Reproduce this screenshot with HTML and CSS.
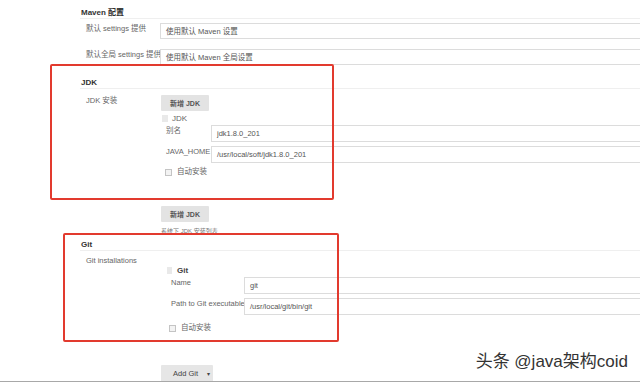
FILE: index.html
```html
<!DOCTYPE html>
<html lang="zh-CN">

<head>
    <meta charset="UTF-8">
    <meta name="viewport" content="width=device-width, initial-scale=1.0">
    <title>全局工具配置</title>

    <link rel="stylesheet" href="styles.css">
</head>

<body>

    <div class="viewport">
        <div class="page">

            <!-- MAVEN -->
            <section class="section section__maven">
                <div class="section__title">Maven 配置</div>
                <div class="row">
                    <div class="row__label">默认 settings 提供</div>
                    <div class="row__field">
                        <div class="select">使用默认 Maven 设置</div>
                    </div>
                </div>
                <div class="row row--second">
                    <div class="row__label">默认全局 settings 提供</div>
                    <div class="row__field">
                        <div class="select">使用默认 Maven 全局设置</div>
                    </div>
                </div>
            </section>

            <!-- JDK -->
            <section class="section section__jdk">
                <div class="section__title">JDK</div>
                <div class="row row--install">
                    <div class="row__label">JDK 安装</div>
                    <div class="row__field">
                        <button class="btn">新增 JDK</button>
                        <div class="repeat">
                            <div class="repeat__head"><span class="handle"></span>JDK</div>
                            <div class="sub-row">
                                <div class="sub-row__label">别名</div>
                                <div class="input">jdk1.8.0_201</div>
                            </div>
                            <div class="sub-row sub-row--next">
                                <div class="sub-row__label">JAVA_HOME</div>
                                <div class="input">/usr/local/soft/jdk1.8.0_201</div>
                            </div>
                            <div class="check-row"><span class="checkbox"></span>自动安装</div>
                        </div>
                        <button class="btn btn--add">新增 JDK</button>
                        <div class="hint">系统下 JDK 安装列表</div>
                    </div>
                </div>
            </section>

            <!-- GIT -->
            <section class="section section__git">
                <div class="section__title">Git</div>
                <div class="row row--install">
                    <div class="row__label">Git installations</div>
                    <div class="row__field">
                        <div class="repeat repeat--git">
                            <div class="repeat__head"><span class="handle"></span>Git</div>
                            <div class="sub-row">
                                <div class="sub-row__label">Name</div>
                                <div class="input">git</div>
                            </div>
                            <div class="sub-row sub-row--next">
                                <div class="sub-row__label">Path to Git executable</div>
                                <div class="input">/usr/local/git/bin/git</div>
                            </div>
                            <div class="check-row"><span class="checkbox"></span>自动安装</div>
                        </div>
                        <button class="btn btn--git">Add Git <span class="caret">&#9662;</span></button>
                    </div>
                </div>
            </section>

        </div>

        <!-- marks over the screenshot -->
        <div class="red-box red-box--jdk"></div>
        <div class="red-box red-box--git"></div>
        <div class="watermark">头条 @java架构coid</div>
    </div>

</body>
</html>
```

FILE: styles.css
```css
html,
body {
    margin: 0;
    padding: 0;
    background-color: #fff;
    overflow: hidden;
}

body {
    font-family: "Liberation Sans", "Noto Sans CJK SC", sans-serif;
    font-size: 7.5px;
    color: #666;
}

.viewport {
    position: relative;
    width: 640px;
    height: 382px;
    overflow: hidden;
    box-sizing: border-box;
    border-bottom: 1px solid #a8a8a8;
}

.page {
    width: 680px;
    padding-left: 80px;
    box-sizing: border-box;
}

/* Sections */

.section__maven {
    padding-top: 1px;
}

.section__jdk {
    margin-top: 6px;
}

.section__git {
    margin-top: -2px;
}

.section__title {
    padding: 6px 0 0 1px;
    line-height: 11px;
    font-size: 8px;
    font-weight: bold;
    color: #333;
    border-bottom: 1px solid #efefef;
}

.row {
    display: flex;
    align-items: flex-start;
    margin-top: 4px;
}

.row--second {
    margin-top: 10px;
}

.row--install {
    margin-top: 6px;
}

.section__git .row--install {
    margin-top: 4px;
}

.row__label {
    width: 80px;
    padding: 1px 0 0 6px;
    box-sizing: border-box;
    line-height: 10px;
    white-space: nowrap;
}

.row__field {
    flex: 1;
}

.select,
.input {
    border: 1px solid #dcdcdc;
    background-color: #fff;
    color: #555;
    padding-left: 5px;
    box-sizing: border-box;
    white-space: nowrap;
}

.select {
    height: 16px;
    line-height: 15px;
}

/* Buttons */

.btn {
    display: block;
    margin-left: 1px;
    height: 16px;
    width: 48px;
    padding: 0;
    border: none;
    border-radius: 1px;
    background-color: #e3e3e3;
    font-family: inherit;
    font-size: 7px;
    font-weight: bold;
    color: #555;
    cursor: pointer;
}

.btn--add {
    margin-top: 29px;
}

.btn--git {
    margin-top: 32px;
    width: 52px;
    height: 17px;
    font-weight: normal;
    font-size: 7.5px;
    color: #444;
    background-color: #e6e6e6;
    text-align: left;
    padding-left: 12px;
}

.caret {
    margin-left: 7px;
    font-size: 6px;
}

.hint {
    margin-top: 5px;
    line-height: 8px;
    font-size: 6px;
    color: #777;
    padding-left: 1px;
}

/* Repeated blocks */

.repeat {
    padding-left: 2px;
}

.repeat__head {
    display: flex;
    align-items: center;
    margin-top: 3px;
    line-height: 9px;
    font-size: 8px;
    color: #666;
}

.handle {
    display: inline-block;
    width: 6px;
    height: 7px;
    margin-right: 4px;
    background-color: #e9e9e9;
}

.sub-row {
    display: flex;
    align-items: flex-start;
    margin-top: 2px;
}

.sub-row--next {
    margin-top: 4px;
}

.sub-row__label {
    width: 49px;
    padding: 1px 0 0 4px;
    box-sizing: border-box;
    line-height: 10px;
    white-space: nowrap;
}

.input {
    flex: 1;
    height: 17px;
    line-height: 16px;
}

.check-row {
    display: flex;
    align-items: center;
    margin-top: 4px;
    padding-left: 3px;
    line-height: 10px;
}

.checkbox {
    display: inline-block;
    width: 5px;
    height: 5px;
    margin-right: 5px;
    border: 1px solid #c4c4c4;
    background-color: #f3f3f3;
}

/* Git block */

.repeat--git {
    padding-left: 7px;
}

.repeat--git .repeat__head {
    margin-top: 11px;
    font-weight: bold;
    color: #444;
}

.repeat--git .handle {
    width: 5px;
    margin-right: 5px;
}

.repeat--git .sub-row__label {
    width: 77px;
}

.repeat--git .check-row {
    margin-top: 8px;
    padding-left: 2px;
}

/* Red frames */

.red-box {
    position: absolute;
    border: 2px solid #e23a2e;
    border-radius: 2px;
    box-sizing: border-box;
}

.red-box--jdk {
    left: 50px;
    top: 64px;
    width: 284px;
    height: 136px;
}

.red-box--git {
    left: 63px;
    top: 233px;
    width: 276px;
    height: 109px;
}

/* Watermark */

.watermark {
    position: absolute;
    right: 12px;
    top: 350px;
    font-size: 17px;
    line-height: 24px;
    color: #333;
    text-shadow: 0 0 2px #fff, 0 0 1px #fff;
    white-space: nowrap;
}
```
